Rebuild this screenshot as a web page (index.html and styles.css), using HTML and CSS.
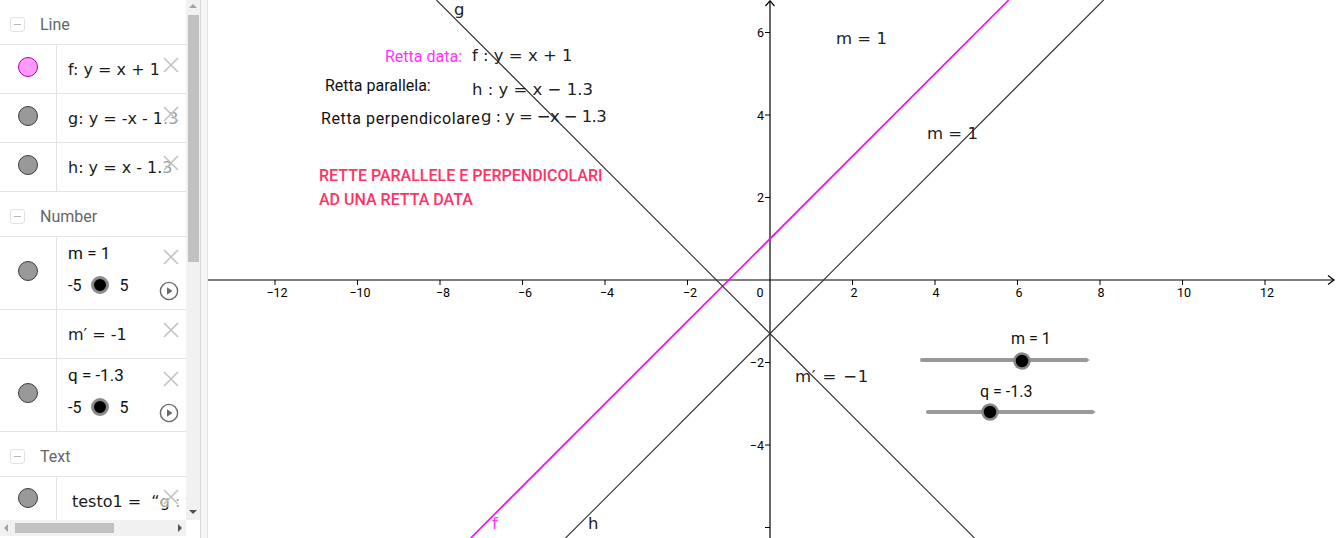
FILE: index.html
```html
<!DOCTYPE html>
<html>
<head>
<meta charset="utf-8">
<link rel="stylesheet" href="styles.css">
</head>
<body>
<div class="app">
  <div class="sidebar">
    <div class="list">
      <div class="group-head"><span class="collapse"></span><span class="group-title">Line</span></div>
      <div class="item">
        <div class="marble"><span class="dot pink"></span></div>
        <div class="content"><span class="formula">f: y = x + 1</span></div>
        <span class="del"><svg viewBox="0 0 16 16"><path d="M1 1L15 15M15 1L1 15"/></svg></span>
      </div>
      <div class="item">
        <div class="marble"><span class="dot"></span></div>
        <div class="content"><span class="formula">g: y = -x - 1.3</span></div>
        <span class="del"><svg viewBox="0 0 16 16"><path d="M1 1L15 15M15 1L1 15"/></svg></span>
      </div>
      <div class="item">
        <div class="marble"><span class="dot"></span></div>
        <div class="content"><span class="formula">h: y = x - 1.3</span></div>
        <span class="del"><svg viewBox="0 0 16 16"><path d="M1 1L15 15M15 1L1 15"/></svg></span>
      </div>
      <div class="group-head"><span class="collapse"></span><span class="group-title">Number</span></div>
      <div class="item slider-item">
        <div class="marble"><span class="dot"></span></div>
        <div class="content">
          <div class="name">m = 1</div>
          <div class="range"><span>-5</span><span class="knob"></span><span>5</span></div>
        </div>
        <span class="del"><svg viewBox="0 0 16 16"><path d="M1 1L15 15M15 1L1 15"/></svg></span>
        <span class="play"><svg viewBox="0 0 20 20"><circle cx="10" cy="10" r="8.6"/><path d="M8 6.3L13.6 10L8 13.7Z"/></svg></span>
      </div>
      <div class="item">
        <div class="marble"></div>
        <div class="content"><span class="formula">m′ = -1</span></div>
        <span class="del"><svg viewBox="0 0 16 16"><path d="M1 1L15 15M15 1L1 15"/></svg></span>
      </div>
      <div class="item slider-item">
        <div class="marble"><span class="dot"></span></div>
        <div class="content">
          <div class="name">q = -1.3</div>
          <div class="range"><span>-5</span><span class="knob"></span><span>5</span></div>
        </div>
        <span class="del"><svg viewBox="0 0 16 16"><path d="M1 1L15 15M15 1L1 15"/></svg></span>
        <span class="play"><svg viewBox="0 0 20 20"><circle cx="10" cy="10" r="8.6"/><path d="M8 6.3L13.6 10L8 13.7Z"/></svg></span>
      </div>
      <div class="group-head"><span class="collapse"></span><span class="group-title">Text</span></div>
      <div class="item text-item">
        <div class="marble"><span class="dot"></span></div>
        <div class="content"><span class="formula">testo1 = &nbsp;“g : y = −x − 1.3”</span></div>
        <span class="del"><svg viewBox="0 0 16 16"><path d="M1 1L15 15M15 1L1 15"/></svg></span>
      </div>
    </div>
    <div class="hscroll">
      <span class="harrow left"></span>
      <span class="hthumb"></span>
      <span class="hspace"></span>
      <span class="harrow right"></span>
    </div>
  </div>
  <div class="vscroll">
    <div class="vtrack">
      <span class="varrow up"></span>
      <span class="vthumb"></span>
      <span class="vspace"></span>
      <span class="varrow down"></span>
    </div>
    <div class="corner"></div>
  </div>
  <div class="splitter"></div>
  <div class="graphics">
    <svg class="canvas" width="1128" height="538" viewBox="208 0 1128 538">
      <g class="axes">
        <line x1="208" y1="280" x2="1334" y2="280"/>
        <path d="M1328 275.5L1334 280L1328 284.5" fill="none"/>
        <line x1="770" y1="1" x2="770" y2="538"/>
        <path d="M765.5 6L770 0.8L774.5 6" fill="none"/>
        <g class="ticks">
          <line x1="275" y1="280" x2="275" y2="285"/>
          <line x1="357.5" y1="280" x2="357.5" y2="285"/>
          <line x1="440" y1="280" x2="440" y2="285"/>
          <line x1="522.5" y1="280" x2="522.5" y2="285"/>
          <line x1="605" y1="280" x2="605" y2="285"/>
          <line x1="687.5" y1="280" x2="687.5" y2="285"/>
          <line x1="852.5" y1="280" x2="852.5" y2="285"/>
          <line x1="935" y1="280" x2="935" y2="285"/>
          <line x1="1017.5" y1="280" x2="1017.5" y2="285"/>
          <line x1="1100" y1="280" x2="1100" y2="285"/>
          <line x1="1182.5" y1="280" x2="1182.5" y2="285"/>
          <line x1="1265" y1="280" x2="1265" y2="285"/>
          <line x1="765" y1="32.5" x2="770" y2="32.5"/>
          <line x1="765" y1="115" x2="770" y2="115"/>
          <line x1="765" y1="197.5" x2="770" y2="197.5"/>
          <line x1="765" y1="362.5" x2="770" y2="362.5"/>
          <line x1="765" y1="445" x2="770" y2="445"/>
          <line x1="765" y1="527.5" x2="770" y2="527.5"/>
        </g>
      </g>
      <g class="axis-labels">
        <text x="277" y="297">−12</text>
        <text x="360" y="297">−10</text>
        <text x="443" y="297">−8</text>
        <text x="525" y="297">−6</text>
        <text x="607" y="297">−4</text>
        <text x="690" y="297">−2</text>
        <text x="760" y="297">0</text>
        <text x="854" y="297">2</text>
        <text x="936" y="297">4</text>
        <text x="1019" y="297">6</text>
        <text x="1101" y="297">8</text>
        <text x="1184" y="297">10</text>
        <text x="1267" y="297">12</text>
      </g>
      <g class="axis-labels yl">
        <text x="764" y="37">6</text>
        <text x="764" y="120">4</text>
        <text x="764" y="202">2</text>
        <text x="764" y="367">−2</text>
        <text x="764" y="450">−4</text>
      </g>
      <line class="ln-f" x1="470.75" y1="538" x2="1008.75" y2="0"/>
      <line class="ln-dark" x1="565.6" y1="538" x2="1103.6" y2="0"/>
      <line class="ln-dark" x1="436.4" y1="0" x2="974.4" y2="538"/>
      <g class="gslider">
        <line class="track" x1="922" y1="360" x2="1086" y2="360"/>
        <path class="tip" d="M1085 357.5L1090 360L1085 362.5Z"/>
        <circle class="kn" cx="1022" cy="361" r="7.5"/>
        <line class="track" x1="928" y1="412" x2="1092" y2="412"/>
        <path class="tip" d="M1091 409.5L1096 412L1091 414.5Z"/>
        <circle class="kn" cx="990" cy="412" r="7.5"/>
      </g>
    </svg>
    <span class="lbl math" style="left:246px;top:0px">g</span>
    <span class="lbl txt magenta" style="left:177px;top:47px">Retta data:</span>
    <span class="lbl math" style="left:264px;top:46px">f : y = x + 1</span>
    <span class="lbl txt" style="left:117px;top:76px">Retta parallela:</span>
    <span class="lbl math" style="left:264px;top:80px">h : y = x − 1.3</span>
    <span class="lbl txt wide" style="left:113px;top:109px">Retta perpendicolare</span>
    <span class="lbl math tight" style="left:273px;top:107px">g : y = −x − 1.3</span>
    <span class="lbl title" style="left:111px;top:166px">RETTE PARALLELE E PERPENDICOLARI</span>
    <span class="lbl title" style="left:111px;top:190px">AD UNA RETTA DATA</span>
    <span class="lbl math" style="left:628px;top:29px">m = 1</span>
    <span class="lbl math" style="left:719px;top:124px">m = 1</span>
    <span class="lbl math wideish" style="left:587px;top:367px">m′ = −1</span>
    <span class="lbl math magenta" style="left:284px;top:514px">f</span>
    <span class="lbl math" style="left:380px;top:514px">h</span>
    <span class="lbl txt" style="left:803px;top:329px">m = 1</span>
    <span class="lbl txt" style="left:772px;top:382px">q = -1.3</span>
  </div>
</div>
</body>
</html>
```

FILE: styles.css
```css
* { box-sizing: border-box; }
html, body { margin: 0; padding: 0; width: 1336px; height: 538px; overflow: hidden; background: #fff; }
body { font-family: Roboto, "Noto Sans", sans-serif; color: #222; }

.app { display: flex; width: 1336px; height: 538px; }

/* ---------- algebra sidebar ---------- */
.sidebar { width: 186px; flex: none; display: flex; flex-direction: column; background: #fff; }
.list { flex: 1; overflow: hidden; }

.group-head {
  height: 45px; display: flex; align-items: center; gap: 15px;
  padding: 5px 0 0 10px; border-bottom: 1px solid #e3e3e3;
}
.collapse {
  width: 15px; height: 15px; border: 1px solid #e2e2e2; border-radius: 3px;
  display: flex; align-items: center; justify-content: center;
}
.collapse::after { content: ""; width: 7px; height: 1.5px; background: #b5b5b5; }
.group-title { font-size: 16px; color: #666; line-height: 20px; }

.item { position: relative; display: flex; height: 49px; border-bottom: 1px solid #e3e3e3; }
.slider-item { height: 73px; }
.marble {
  width: 57px; flex: none; border-right: 1px solid #e3e3e3;
  display: flex; justify-content: center; align-items: flex-start; padding-top: 12px;
}
.slider-item .marble { padding-top: 24px; }
.text-item .marble { padding-top: 11px; }
.dot { width: 20px; height: 20px; border-radius: 50%; background: #999; border: 1.5px solid #3c3c3c; }
.dot.pink { background: #ff99ff; border-color: #b000b0; }

.content { flex: 1; min-width: 0; padding: 15px 0 0 11px; overflow: hidden; white-space: nowrap; }
.text-item .content { padding-left: 15px; }
.slider-item .content { padding-top: 6px; }
.formula { font-family: "DejaVu Sans", sans-serif; font-size: 16px; line-height: 20px; color: #1a1a1a; }
.name { font-size: 17px; line-height: 20px; color: #111; }
.range { display: flex; align-items: center; gap: 10px; margin-top: 12px; height: 20px; font-size: 16px; color: #111; }
.knob { width: 18px; height: 18px; border-radius: 50%; background: #000; border: 3px solid #8a8a8a; }

.del {
  position: absolute; left: 161px; top: 10px; width: 20px; height: 20px; padding: 2px;
  background: rgba(255,255,255,0.55);
}
.del svg { display: block; width: 16px; height: 16px; }
.del path { stroke: #c2c2c2; stroke-width: 1.6; fill: none; }
.play { position: absolute; left: 159px; top: 44px; width: 20px; height: 20px; }
.play svg { display: block; width: 20px; height: 20px; }
.play circle { fill: none; stroke: #6a6a6a; stroke-width: 1.4; }
.play path { fill: #6a6a6a; }

.hscroll { height: 16px; flex: none; display: flex; align-items: center; background: #f1f1f1; padding: 0 4px; margin-bottom: 2px; }
.harrow { width: 0; height: 0; border-top: 4px solid transparent; border-bottom: 4px solid transparent; }
.harrow.left { border-right: 4px solid #a3a3a3; margin-right: 7px; }
.harrow.right { border-left: 4px solid #505050; margin-left: 4px; }
.hthumb { width: 99px; height: 10px; background: #c1c1c1; }
.hspace { flex: 1; }

.vscroll { width: 14px; flex: none; display: flex; flex-direction: column; }
.vtrack { height: 520px; background: #f1f1f1; display: flex; flex-direction: column; align-items: center; }
.varrow { width: 0; height: 0; border-left: 4px solid transparent; border-right: 4px solid transparent; }
.varrow.up { border-bottom: 4px solid #a3a3a3; margin: 4px 0 7px; }
.varrow.down { border-top: 4px solid #505050; margin-bottom: 6px; }
.vthumb { width: 11px; height: 247px; background: #c1c1c1; }
.vspace { flex: 1; }
.corner { flex: 1; background: #fff; }

.splitter { width: 8px; flex: none; background: #f6f6f6; border-left: 1px solid #d8d8d8; border-right: 1px solid #e4e4e4; }

/* ---------- graphics view ---------- */
.graphics { position: relative; flex: 1; overflow: hidden; background: #fff; }
.canvas { position: absolute; left: 0; top: 0; display: block; }
.axes line, .axes path { stroke: #000; stroke-width: 1.2; }
.ticks line { stroke-width: 1; }
.axis-labels text { font-family: Roboto, sans-serif; font-size: 12.5px; fill: #000; text-anchor: middle; }
.axis-labels.yl text { text-anchor: end; }
.ln-f { stroke: #ff00ff; stroke-width: 1.6; }
.ln-dark { stroke: #333; stroke-width: 1.1; }
.gslider .track { stroke: #999; stroke-width: 4; stroke-linecap: round; }
.gslider .tip { fill: #999; }
.gslider .kn { fill: #000; stroke: #888; stroke-width: 2.5; }

.lbl { position: absolute; white-space: nowrap; line-height: 20px; }
.lbl.txt { font-family: Roboto, sans-serif; font-size: 16px; color: #111; }
.lbl.wide { letter-spacing: 0.6px; }
.lbl.math { font-family: "DejaVu Sans", sans-serif; font-size: 16.5px; color: #222; }
.lbl.tight { letter-spacing: -0.6px; }
.lbl.wideish { letter-spacing: 0.8px; }
.lbl.title { font-family: Roboto, sans-serif; font-size: 16px; font-weight: 500; color: #ff3366; }
.magenta { color: #ff33ff !important; }
```
